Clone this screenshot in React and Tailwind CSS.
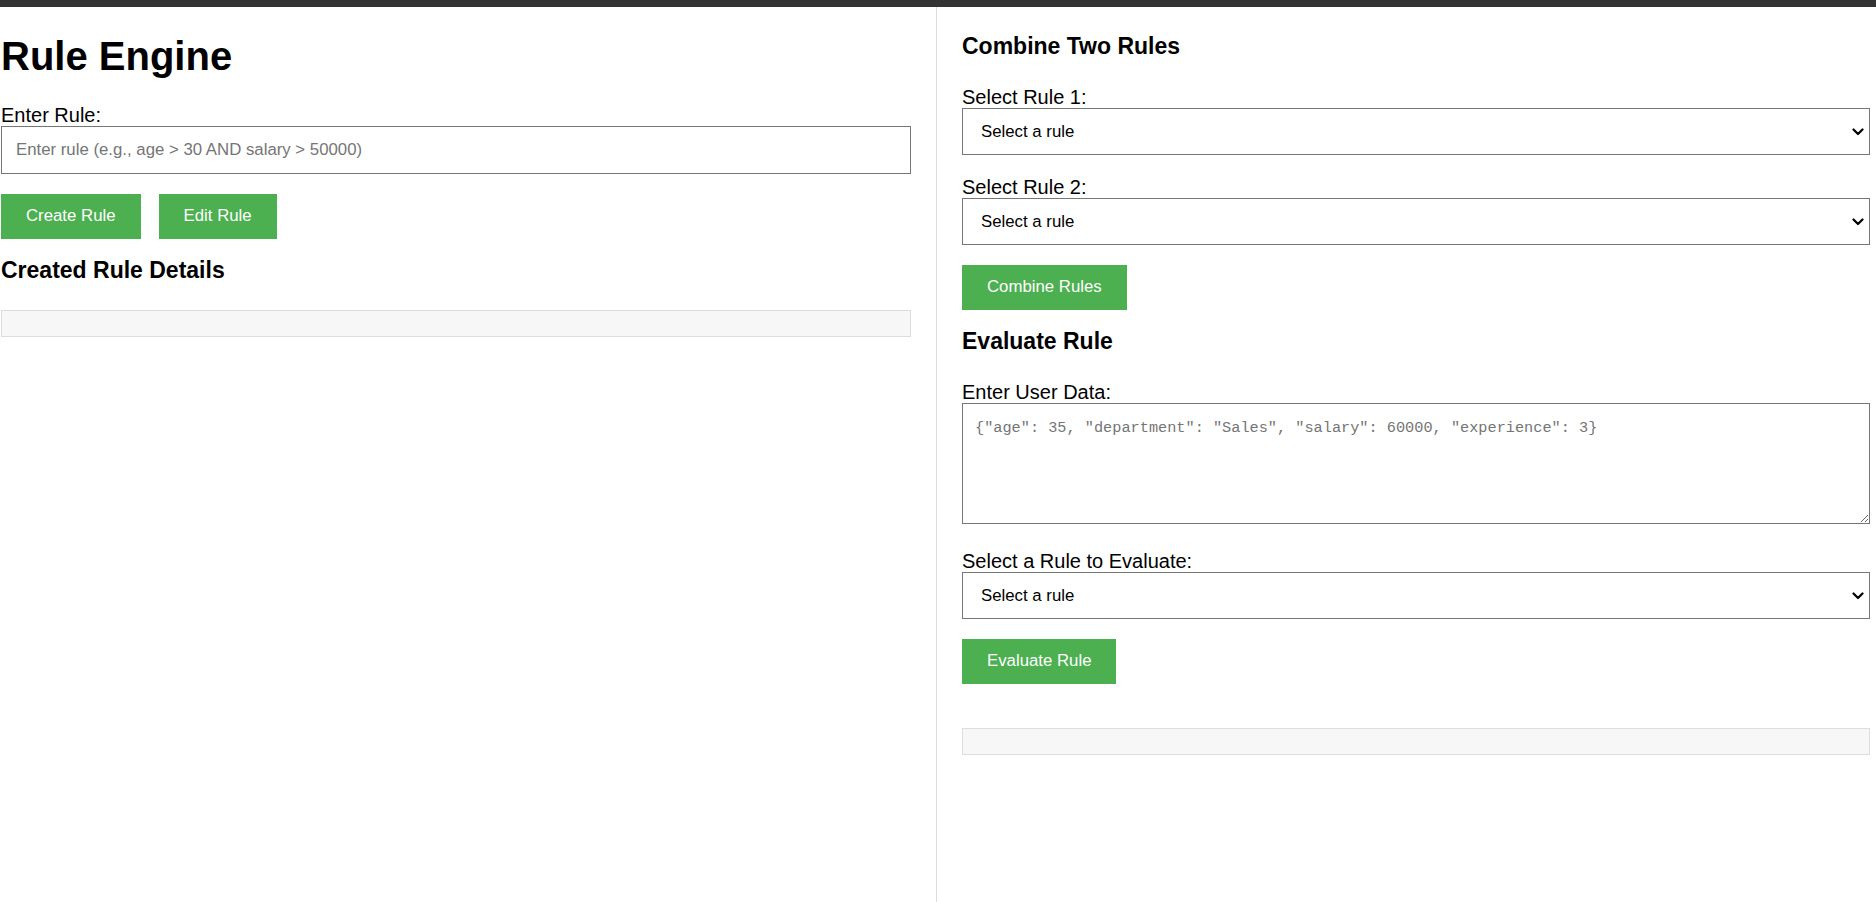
import { useState } from "react";

const font = "font-['Liberation_Sans',Arial,sans-serif]";

// Etiqueta de campo
function Label({ children, className = "" }) {
  return (
    <label className={`block text-[20px] leading-[22px] text-black ${className}`}>
      {children}
    </label>
  );
}

function GreenButton({ children, className = "" }) {
  return (
    <button
      type="button"
      className={`h-[45px] px-[25px] bg-[#4caf50] text-white text-[16.8px] leading-none ${className}`}
    >
      {children}
    </button>
  );
}

function RuleSelect({ rules, className = "" }) {
  return (
    <div className={`relative ${className}`}>
      <select
        defaultValue=""
        className="block w-full h-[47px] appearance-none border border-[#767676] bg-white pl-[18px] pr-8 text-[16.8px] text-black"
      >
        <option value="">Select a rule</option>
        {rules.map((r) => (
          <option key={r} value={r}>
            {r}
          </option>
        ))}
      </select>
      {/* chevron del select */}
      <svg
        className="pointer-events-none absolute right-[6px] top-1/2 -translate-y-1/2"
        width="12"
        height="8"
        viewBox="0 0 12 8"
      >
        <polyline
          points="1.5,1.5 6,6 10.5,1.5"
          fill="none"
          stroke="#000"
          strokeWidth="2.2"
          strokeLinecap="round"
          strokeLinejoin="round"
        />
      </svg>
    </div>
  );
}

export default function App() {
  const [rules] = useState([]);

  return (
    <div className={`min-h-screen bg-white ${font}`}>
      <div className="h-[7px] bg-[#333]" />

      <div className="flex min-h-[895px]">
        {/* Izquierda: crear regla */}
        <div className="w-[937px] shrink-0 border-r border-[#ddd] pl-[1px] pr-[25px]">
          <h1 className="mt-[27px] text-[40px] leading-[45px] font-bold text-black">Rule Engine</h1>

          <Label className="mt-[25px]">Enter Rule:</Label>
          <input
            type="text"
            placeholder="Enter rule (e.g., age > 30 AND salary > 50000)"
            className="block w-full h-[48px] border border-[#767676] px-[14px] text-[16.8px] text-black placeholder:text-[#757575]"
          />

          <div className="mt-[20px] flex gap-[18px]">
            <GreenButton>Create Rule</GreenButton>
            <GreenButton>Edit Rule</GreenButton>
          </div>

          <h3 className="mt-[18px] text-[23px] leading-[27px] font-bold text-black">Created Rule Details</h3>

          <div className="mt-[26px] h-[27px] border border-[#ddd] bg-[#f7f7f7]" />
        </div>

        {/* Derecha: combinar y evaluar */}
        <div className="flex-1 pl-[25px] pr-[6px]">
          <h3 className="mt-[26px] text-[23px] leading-[27px] font-bold text-black">Combine Two Rules</h3>

          <Label className="mt-[26px]">Select Rule 1:</Label>
          <RuleSelect rules={rules} />

          <Label className="mt-[21px]">Select Rule 2:</Label>
          <RuleSelect rules={rules} />

          <GreenButton className="mt-[20px]">Combine Rules</GreenButton>

          <h3 className="mt-[18px] text-[23px] leading-[27px] font-bold text-black">Evaluate Rule</h3>

          <Label className="mt-[26px]">Enter User Data:</Label>
          <textarea
            placeholder='{"age": 35, "department": "Sales", "salary": 60000, "experience": 3}'
            className="block w-full h-[121px] border border-[#767676] pl-[12px] pt-[13px] font-['Liberation_Mono',monospace] text-[15.25px] leading-[22px] text-black placeholder:text-[#757575]"
          />

          <Label className="mt-[26px]">Select a Rule to Evaluate:</Label>
          <RuleSelect rules={rules} />

          <GreenButton className="mt-[20px]">Evaluate Rule</GreenButton>

          <div className="mt-[44px] h-[27px] border border-[#ddd] bg-[#f7f7f7]" />
        </div>
      </div>
    </div>
  );
}
